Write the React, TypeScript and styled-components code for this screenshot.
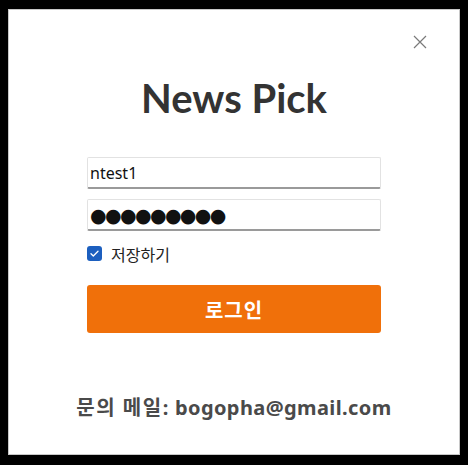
import styled, { createGlobalStyle } from 'styled-components';

const GlobalStyle = createGlobalStyle`
  html, body {
    margin: 0;
    padding: 0;
    background: #000;
  }
  body {
    font-family: 'Noto Sans', 'Noto Sans CJK KR', sans-serif;
  }
`;

function CloseIcon() {
  return (
    <svg width="14" height="14" viewBox="0 0 14 14">
      <path d="M1 1 L13 13 M13 1 L1 13" stroke="#7a7a7a" strokeWidth="1.2" fill="none" />
    </svg>
  );
}

function CheckMark() {
  return (
    <svg width="15" height="15" viewBox="0 0 15 15">
      <path d="M4 7.8 L6.3 10 L11 5.2" stroke="#fff" strokeWidth="1.3" fill="none" strokeLinecap="round" strokeLinejoin="round" />
    </svg>
  );
}

const passwordMask = '\u25CF'.repeat(9);

function App() {
  return (
    <>
      <GlobalStyle />
      <Frame>
        <Panel>
          <TopBar>
            <CloseButton aria-label="close">
              <CloseIcon />
            </CloseButton>
          </TopBar>
          <Title>News Pick</Title>
          <Form>
            <TextField type="text" defaultValue="ntest1" />
            <TextField type="text" $secret defaultValue={passwordMask} />
            <SaveRow>
              <CheckBox>
                <CheckMark />
              </CheckBox>
              <span>저장하기</span>
            </SaveRow>
            <LoginButton>로그인</LoginButton>
          </Form>
          <Footer>
            <FooterLabel>문의 메일:</FooterLabel> <FooterMail>bogopha@gmail.com</FooterMail>
          </Footer>
        </Panel>
      </Frame>
    </>
  );
}

const Frame = styled.div`
  width: 468px;
  height: 465px;
  padding: 9px 8px 10px 8px;
  box-sizing: border-box;
  background: #000;
`;

const Panel = styled.div`
  width: 452px;
  height: 446px;
  box-sizing: border-box;
  background: #fff;
  border: 1px solid #c8c8c8;
  display: flex;
  flex-direction: column;
  align-items: center;
`;

const TopBar = styled.div`
  align-self: stretch;
  display: flex;
  justify-content: flex-end;
  padding: 25px 32px 0 0;
  height: 14px;
`;

const CloseButton = styled.button`
  border: none;
  background: none;
  padding: 0;
  width: 14px;
  height: 14px;
  display: flex;
  cursor: pointer;
`;

const Title = styled.h1`
  margin: 22px 0 0;
  font-family: 'Lato', sans-serif;
  font-size: 40px;
  line-height: 54px;
  font-weight: 700;
  color: #333;
`;

const Form = styled.div`
  width: 294px;
  margin-top: 32px;
  display: flex;
  flex-direction: column;
`;

const TextField = styled.input<{ $secret?: boolean }>`
  box-sizing: border-box;
  width: 100%;
  height: 32px;
  margin-bottom: 10px;
  padding: 0 2px;
  border: 1px solid #e2e2e2;
  border-bottom: 2px solid #9a9a9a;
  border-radius: 2px;
  outline: none;
  color: #111;
  font-family: ${(p) => (p.$secret ? "'DejaVu Sans', sans-serif" : "'Noto Sans', 'Noto Sans CJK KR', sans-serif")};
  font-size: ${(p) => (p.$secret ? '19px' : '16px')};
  letter-spacing: ${(p) => (p.$secret ? '-1.6px' : '0')};
`;

const SaveRow = styled.label`
  display: flex;
  align-items: center;
  gap: 9px;
  margin-top: 4px;
  font-family: 'Noto Sans CJK KR', sans-serif;
  font-size: 16px;
  color: #222;
  height: 17px;
`;

const CheckBox = styled.span`
  width: 15px;
  height: 15px;
  border-radius: 3px;
  background: #1c5fbf;
  display: flex;
`;

const LoginButton = styled.button`
  margin-top: 23px;
  height: 48px;
  width: 100%;
  border: none;
  border-radius: 3px;
  background: #f0700a;
  color: #fff;
  font-family: 'Noto Sans CJK KR', sans-serif;
  font-size: 20px;
  font-weight: 700;
  letter-spacing: 1px;
  cursor: pointer;
`;

const Footer = styled.div`
  margin-top: 59px;
  font-family: 'Noto Sans', 'Noto Sans CJK KR', sans-serif;
  font-size: 20px;
  font-weight: 700;
  color: #4a4a4a;
`;

const FooterLabel = styled.span`
  letter-spacing: 1.5px;
`;

const FooterMail = styled.span`
  letter-spacing: 0.4px;
`;

export default App;
